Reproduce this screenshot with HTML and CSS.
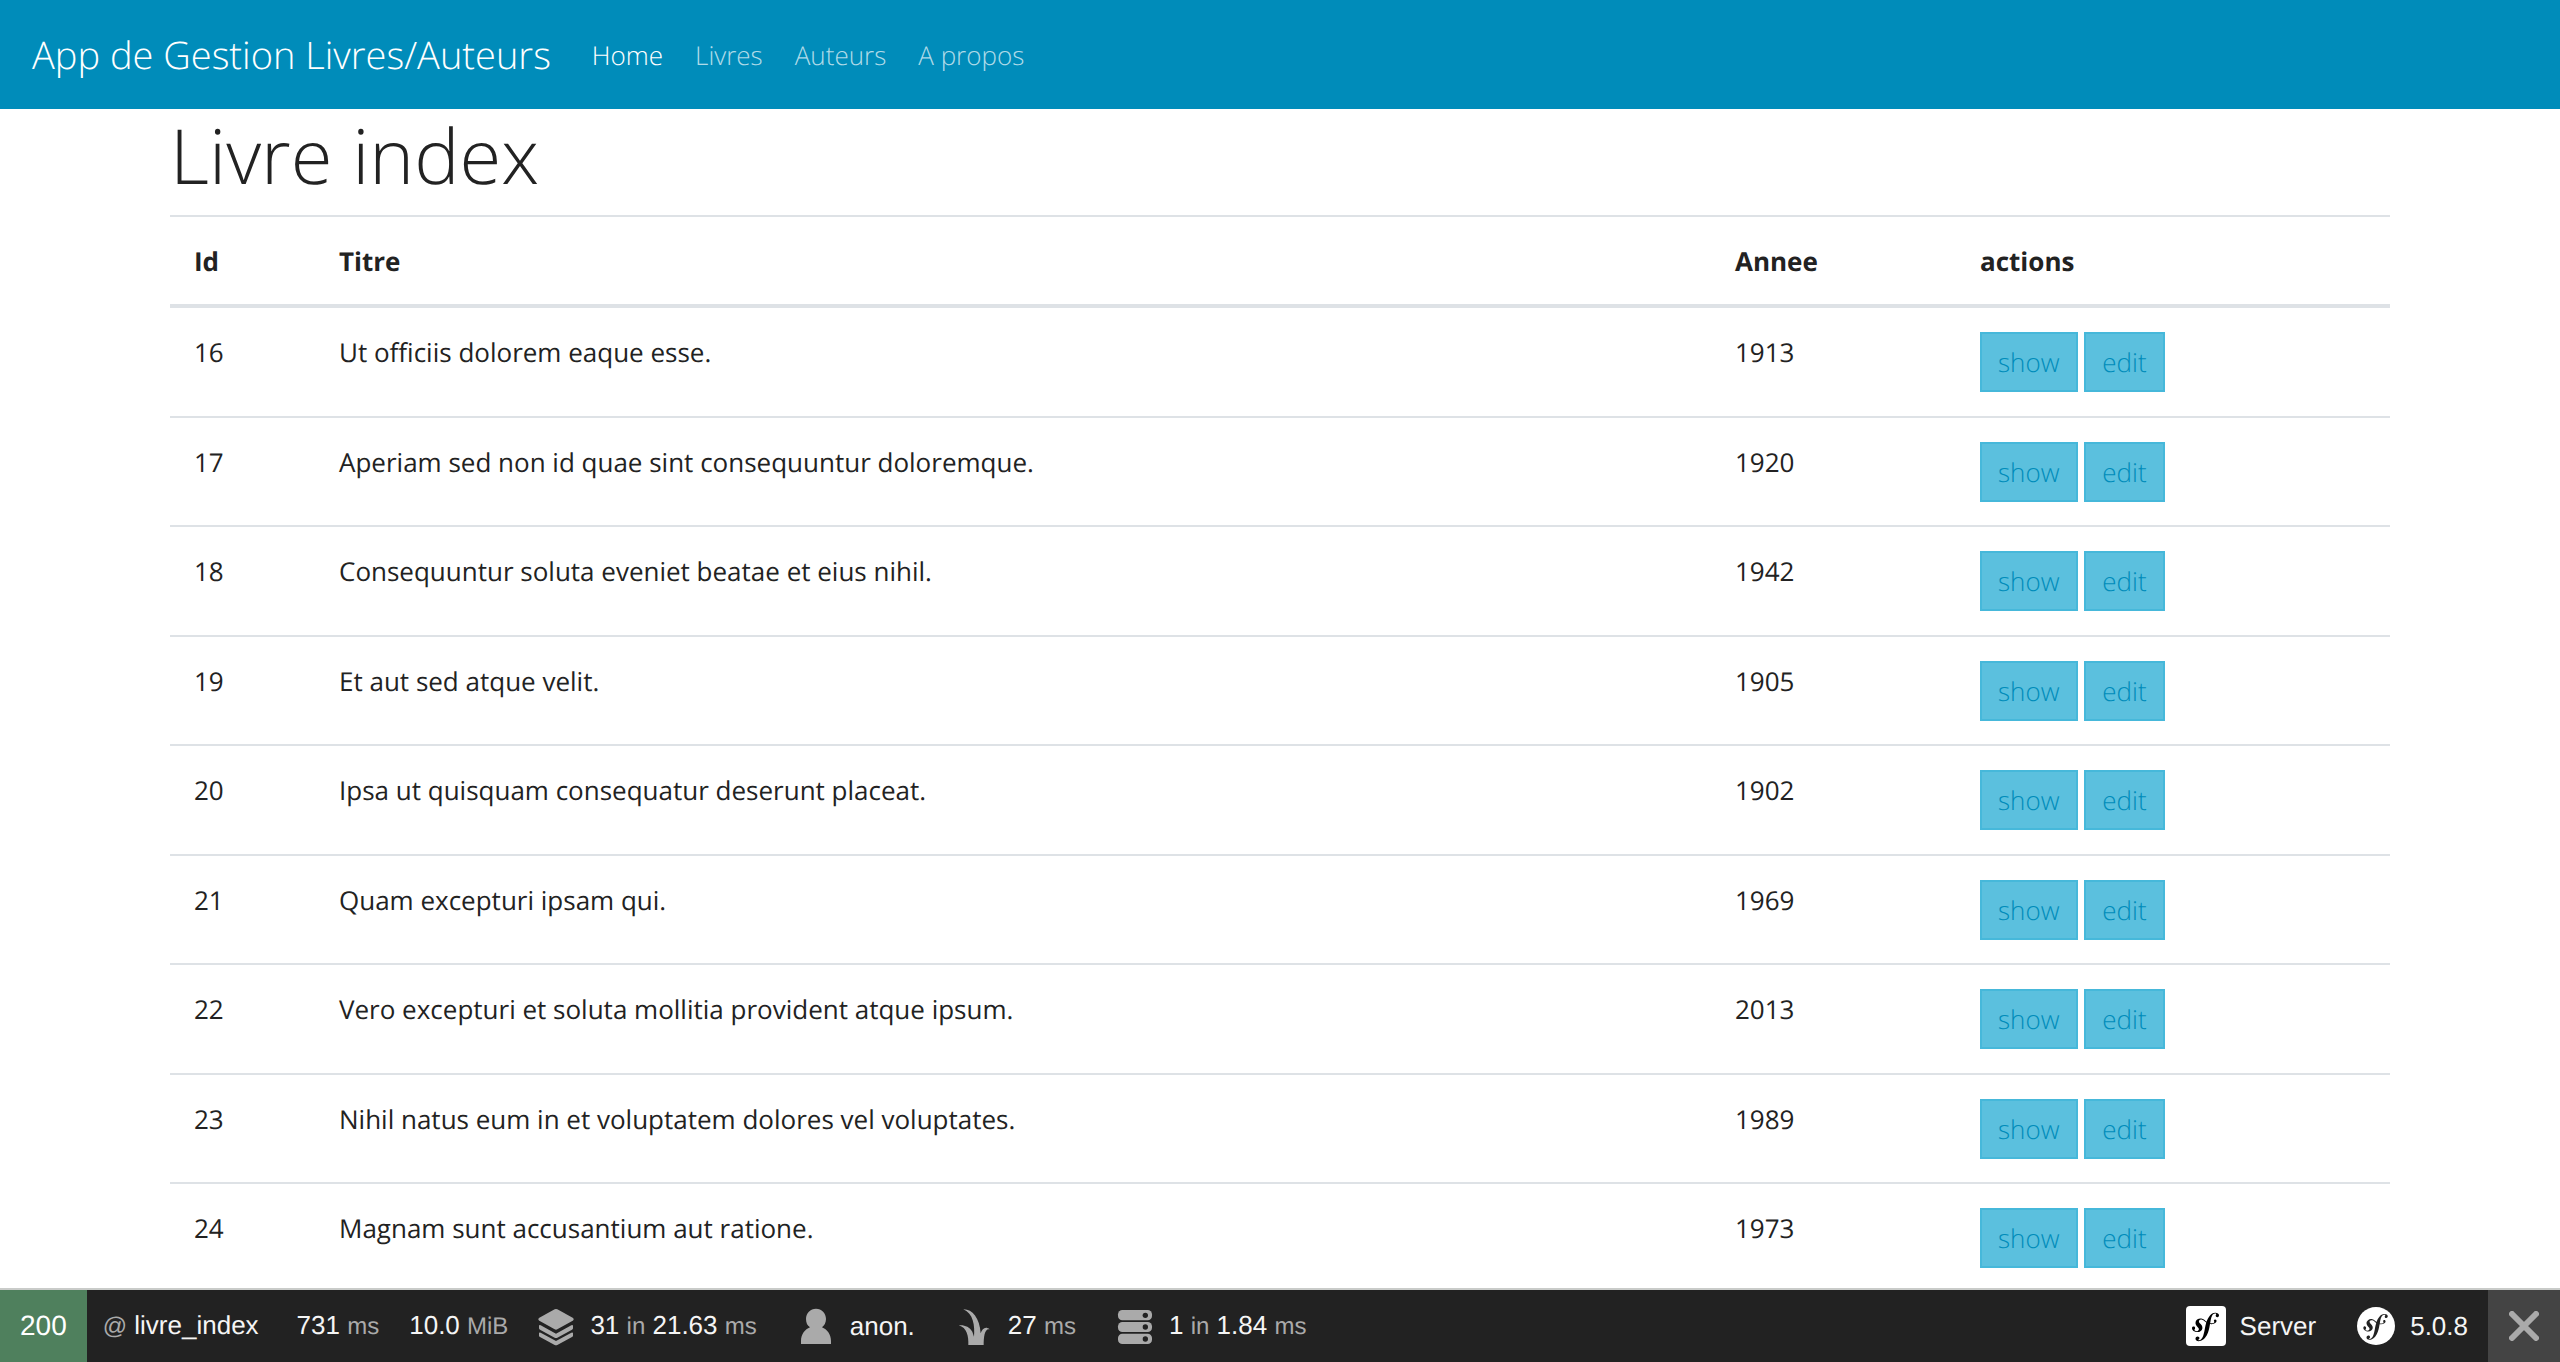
FILE: index.html
```html
<!DOCTYPE html>
<html lang="fr">
<head>
<meta charset="utf-8">
<title>Livre index</title>
<link rel="stylesheet" href="styles.css">
</head>
<body>
<nav class="navbar">
  <a class="brand" href="#">App de Gestion Livres/Auteurs</a>
  <ul class="nav">
    <li><a class="nav-link active" href="#">Home</a></li>
    <li><a class="nav-link" href="#">Livres</a></li>
    <li><a class="nav-link" href="#">Auteurs</a></li>
    <li><a class="nav-link" href="#">A propos</a></li>
  </ul>
</nav>
<main class="container">
  <h1>Livre index</h1>
  <table class="table">
    <thead>
      <tr><th class="col-id">Id</th><th>Titre</th><th class="col-year">Annee</th><th class="col-actions">actions</th></tr>
    </thead>
    <tbody>
      <tr><td>16</td><td>Ut officiis dolorem eaque esse.</td><td>1913</td><td><a class="btn" href="#">show</a> <a class="btn" href="#">edit</a></td></tr>
      <tr><td>17</td><td>Aperiam sed non id quae sint consequuntur doloremque.</td><td>1920</td><td><a class="btn" href="#">show</a> <a class="btn" href="#">edit</a></td></tr>
      <tr><td>18</td><td>Consequuntur soluta eveniet beatae et eius nihil.</td><td>1942</td><td><a class="btn" href="#">show</a> <a class="btn" href="#">edit</a></td></tr>
      <tr><td>19</td><td>Et aut sed atque velit.</td><td>1905</td><td><a class="btn" href="#">show</a> <a class="btn" href="#">edit</a></td></tr>
      <tr><td>20</td><td>Ipsa ut quisquam consequatur deserunt placeat.</td><td>1902</td><td><a class="btn" href="#">show</a> <a class="btn" href="#">edit</a></td></tr>
      <tr><td>21</td><td>Quam excepturi ipsam qui.</td><td>1969</td><td><a class="btn" href="#">show</a> <a class="btn" href="#">edit</a></td></tr>
      <tr><td>22</td><td>Vero excepturi et soluta mollitia provident atque ipsum.</td><td>2013</td><td><a class="btn" href="#">show</a> <a class="btn" href="#">edit</a></td></tr>
      <tr><td>23</td><td>Nihil natus eum in et voluptatem dolores vel voluptates.</td><td>1989</td><td><a class="btn" href="#">show</a> <a class="btn" href="#">edit</a></td></tr>
      <tr><td>24</td><td>Magnam sunt accusantium aut ratione.</td><td>1973</td><td><a class="btn" href="#">show</a> <a class="btn" href="#">edit</a></td></tr>
    </tbody>
  </table>
</main>
<footer class="toolbar">
  <a class="status" href="#">200</a>
  <a class="block route" href="#"><span><small>@</small> livre_index</span></a>
  <a class="block time" href="#"><span>731 <small>ms</small></span></a>
  <a class="block memory" href="#"><span>10.0 <small>MiB</small></span></a>
  <a class="block" href="#">
    <svg class="icon" viewBox="99 96 144 144" aria-hidden="true"><path d="M167 118q4-2 8 0l46 25q6 4 0 9l-46 26q-4 2-8 0l-46-26q-6-5 0-9z"/><path d="M120 168q0-4 5-2l46 25 46-25q5-2 5 2v7q0 2-3 4l-44 24q-4 2-8 0l-44-24q-3-2-3-4z"/><path d="M120 190q0-4 5-2l46 25 46-25q5-2 5 2v7q0 2-3 4l-44 24q-4 2-8 0l-44-24q-3-2-3-4z"/></svg>
    <span>31 <small>in</small> 21.63 <small>ms</small></span>
  </a>
  <a class="block" href="#">
    <svg class="icon" viewBox="873 96 144 144" aria-hidden="true"><path d="M945 116c17 0 30 13 30 31 0 11-5 20-12 25 15 6 27 21 27 41v9h-90v-9c0-20 12-35 27-41-8-5-12-14-12-25 0-18 13-31 30-31z"/></svg>
    <span>anon.</span>
  </a>
  <a class="block" href="#">
    <svg class="icon" viewBox="94 96 144 144" aria-hidden="true"><path d="M149 225c1-26-4-52-29-59 17-2 32 4 41 19l5 15c3-32-2-70-32-82 26-1 49 25 52 72 5-15 15-22 27-12-15-4-18 23-18 47z"/></svg>
    <span>27 <small>ms</small></span>
  </a>
  <a class="block" href="#">
    <svg class="icon" viewBox="576 96 144 144" aria-hidden="true"><rect x="597" y="120" width="102" height="31" rx="13"/><rect x="597" y="156" width="102" height="30" rx="13"/><rect x="597" y="191" width="102" height="31" rx="13"/><g fill="#222"><circle cx="679" cy="136" r="8"/><circle cx="679" cy="171" r="8"/><circle cx="679" cy="207" r="8"/></g></svg>
    <span>1 <small>in</small> 1.84 <small>ms</small></span>
  </a>
  <a class="block server" href="#">
    <svg class="logo" viewBox="0 0 40 40" aria-hidden="true"><rect width="40" height="40" rx="4" fill="#fff"/><path transform="translate(-1 -1) scale(1.75)" fill="#000" d="M17.247 4.439c-1.22.042-2.283.715-3.075 1.644-.878 1.02-1.461 2.229-1.881 3.461-.753-.614-1.332-1.411-2.539-1.758-.932-.267-1.911-.157-2.81.513-.426.319-.721.8-.86 1.254-.36 1.174.381 2.219.719 2.596l.739.791c.151.154.519.556.339 1.138-.192.629-.949 1.034-1.725.796-.348-.106-.845-.366-.733-.73.046-.151.154-.263.211-.393.052-.111.077-.194.093-.242.141-.464-.053-1.068-.55-1.221-.465-.143-.939-.03-1.125.568-.209.68.117 1.913 1.86 2.449 2.04.628 3.768-.483 4.012-1.932.153-.907-.256-1.582-1.006-2.447l-.612-.677c-.371-.371-.497-1.002-.114-1.485.324-.409.785-.584 1.539-.379 1.103.3 1.594 1.063 2.412 1.68-.338 1.11-.56 2.223-.759 3.222l-.123.746c-.585 3.07-1.033 4.757-2.194 5.726-.234.166-.57.416-1.073.434-.266.008-.352-.176-.355-.257-.006-.185.15-.271.254-.353.154-.083.39-.224.372-.674-.016-.532-.456-.994-1.094-.973-.477.017-1.203.465-1.176 1.286.028.85.819 1.485 2.012 1.444.638-.021 2.062-.281 3.464-1.949 1.633-1.911 2.09-4.101 2.434-5.706l.383-2.117c.213.024.441.042.69.048 2.032.044 3.049-1.01 3.064-1.776.01-.464-.304-.921-.744-.91-.315.009-.71.219-.805.654-.094.428.646.813.068 1.189-.41.265-1.146.452-2.183.301l.188-1.042c.386-1.976.859-4.408 2.661-4.468.132-.007.612.006.623.323.003.105-.022.134-.147.375-.115.155-.174.345-.168.537.017.504.4.836.957.816.743-.023.955-.748.945-1.119-.032-.874-.952-1.424-2.17-1.386z"/></svg>
    <span>Server</span>
  </a>
  <a class="block version" href="#">
    <svg class="logo" viewBox="-1 -1 40 40" aria-hidden="true"><circle cx="19" cy="19" r="19" fill="#fff"/><path transform="scale(1.583)" fill="#222" d="M17.247 4.439c-1.22.042-2.283.715-3.075 1.644-.878 1.02-1.461 2.229-1.881 3.461-.753-.614-1.332-1.411-2.539-1.758-.932-.267-1.911-.157-2.81.513-.426.319-.721.8-.86 1.254-.36 1.174.381 2.219.719 2.596l.739.791c.151.154.519.556.339 1.138-.192.629-.949 1.034-1.725.796-.348-.106-.845-.366-.733-.73.046-.151.154-.263.211-.393.052-.111.077-.194.093-.242.141-.464-.053-1.068-.55-1.221-.465-.143-.939-.03-1.125.568-.209.68.117 1.913 1.86 2.449 2.04.628 3.768-.483 4.012-1.932.153-.907-.256-1.582-1.006-2.447l-.612-.677c-.371-.371-.497-1.002-.114-1.485.324-.409.785-.584 1.539-.379 1.103.3 1.594 1.063 2.412 1.68-.338 1.11-.56 2.223-.759 3.222l-.123.746c-.585 3.07-1.033 4.757-2.194 5.726-.234.166-.57.416-1.073.434-.266.008-.352-.176-.355-.257-.006-.185.15-.271.254-.353.154-.083.39-.224.372-.674-.016-.532-.456-.994-1.094-.973-.477.017-1.203.465-1.176 1.286.028.85.819 1.485 2.012 1.444.638-.021 2.062-.281 3.464-1.949 1.633-1.911 2.09-4.101 2.434-5.706l.383-2.117c.213.024.441.042.69.048 2.032.044 3.049-1.01 3.064-1.776.01-.464-.304-.921-.744-.91-.315.009-.71.219-.805.654-.094.428.646.813.068 1.189-.41.265-1.146.452-2.183.301l.188-1.042c.386-1.976.859-4.408 2.661-4.468.132-.007.612.006.623.323.003.105-.022.134-.147.375-.115.155-.174.345-.168.537.017.504.4.836.957.816.743-.023.955-.748.945-1.119-.032-.874-.952-1.424-2.17-1.386z"/></svg>
    <span>5.0.8</span>
  </a>
  <button class="close" type="button" aria-label="Close toolbar"><svg viewBox="0 0 30 30" width="30" height="30" aria-hidden="true"><path d="M3 3l24 24M27 3L3 27" stroke="#aaa" stroke-width="6" stroke-linecap="round"/></svg></button>
</footer>
</body>
</html>
```
FILE: styles.css
```css
* { box-sizing: border-box; }

body {
  margin: 0;
  background: #fff;
  color: #222;
  font: 400 26px/40px "Open Sans", sans-serif;
  text-rendering: geometricPrecision;
}

a { text-decoration: none; }

.navbar {
  display: flex;
  align-items: center;
  height: 109px;
  padding: 0 32px;
  background: #008cba;
  font-weight: 300;
}

.brand {
  margin-right: 25px;
  color: #fff;
  font-size: 38px;
  line-height: 58px;
}

.nav {
  display: flex;
  margin: 0;
  padding: 0;
  list-style: none;
}

.nav-link {
  display: block;
  padding: 0 16px;
  color: rgba(255, 255, 255, .7);
}

.nav-link.active { color: #fff; }

.container {
  max-width: 2220px;
  margin: 0 auto;
}

h1 {
  margin: 0 0 12px;
  font-size: 76px;
  font-weight: 300;
  line-height: 94px;
}

.table {
  width: 100%;
  border-spacing: 0;
  table-layout: fixed;
}

.table th,
.table td {
  padding: 24px 24px 23px;
  border-top: 2px solid #dee2e6;
  text-align: left;
  vertical-align: top;
}

.table th { border-bottom: 4px solid #dee2e6; }
.table tbody tr:first-child td { border-top: 0; }
.table tbody tr:nth-child(odd) td { padding-bottom: 24px; }

.col-id { width: 145px; }
.col-year { width: 245px; }
.col-actions { width: 434px; }

.btn {
  display: inline-block;
  height: 60px;
  padding: 8px 16px;
  border: 2px solid #46b8da;
  background: #5bc0de;
  color: #008cba;
  font-weight: 300;
  vertical-align: top;
}

.toolbar {
  position: fixed;
  right: 0;
  bottom: 0;
  left: 0;
  display: flex;
  height: 74px;
  border-top: 2px solid #c9cbc9;
  background: #222;
  color: #f5f5f5;
  font: 26px/36px "Liberation Sans", Arial, sans-serif;
}

.status {
  display: flex;
  align-items: center;
  padding: 0 20px;
  background: #4f805d;
  color: #fff;
  font-size: 28px;
}

.block {
  display: flex;
  align-items: center;
  gap: 10px;
  margin-right: 35px;
  color: inherit;
  white-space: nowrap;
}

.block small {
  color: #aaa;
  font-size: 24px;
}

.route { margin: 0 38px 0 16px; }
.time { margin-right: 30px; }
.memory { margin-right: 24px; }

.icon {
  width: 48px;
  height: 48px;
  fill: #aaa;
}

.logo {
  width: 40px;
  height: 40px;
}

.server {
  gap: 14px;
  margin: 0 40px 0 auto;
}

.version {
  gap: 14px;
  margin-right: 20px;
}

.close {
  display: flex;
  align-items: center;
  justify-content: center;
  width: 72px;
  padding: 0;
  border: 0;
  background: #444;
}
```
